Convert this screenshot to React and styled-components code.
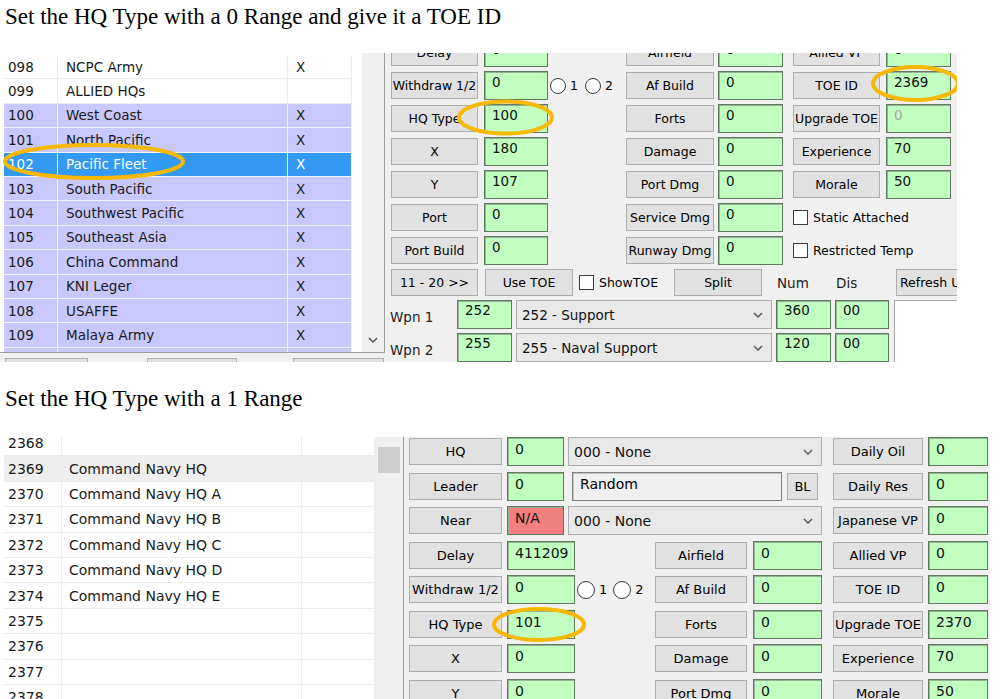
import React from 'react';
import styled, { createGlobalStyle } from 'styled-components';

const GlobalStyle = createGlobalStyle`
  html, body {
    margin: 0;
    padding: 0;
    background: #ffffff;
  }
  body {
    font-family: "DejaVu Sans", "Liberation Sans", sans-serif;
    color: #000;
  }
`;

const Page = styled.div`
  display: flex;
  flex-direction: column;
  width: 1002px;
  height: 699px;
  overflow: hidden;
  background: #fff;
`;

const Caption = styled.div`
  flex-shrink: 0;
  margin: ${p => p.$mt}px 0 ${p => p.$mb}px;
  padding-left: 5px;
  font-family: "Liberation Serif", "Times New Roman", serif;
  font-size: 23px;
  line-height: 26px;
`;

const Shot = styled.div`
  position: relative;
  display: flex;
  flex-shrink: 0;
  width: ${p => p.$w}px;
  height: ${p => p.$h}px;
  background: #f0f0f0;
  overflow: hidden;
  font-family: "DejaVu Sans", sans-serif;
`;

const Side = styled.div`
  display: flex;
  flex-direction: column;
  flex-shrink: 0;
`;

const ListBox = styled.div`
  display: flex;
  flex-shrink: 0;
  width: ${p => p.$w}px;
  height: ${p => p.$h}px;
  box-sizing: border-box;
  background: #fff;
  border-right: 1px solid #9c9c9c;
  border-bottom: ${p => (p.$closed ? '1px solid #9c9c9c' : '0')};
  overflow: hidden;
`;

const Rows = styled.div`
  display: flex;
  flex-direction: column;
  flex-shrink: 0;
  margin: ${p => p.$top}px 0 0 4px;
  font-size: ${p => p.$fs}px;
`;

const tones = {
  plain: { bg: '#ffffff', line: '#ececec', fg: '#1a1a1a' },
  hq: { bg: '#c8c8fc', line: '#f4f4ff', fg: '#1a1a1a' },
  sel: { bg: '#3399f3', line: '#f4f4ff', fg: '#ffffff' },
  hover: { bg: '#eeeeee', line: '#ececec', fg: '#1a1a1a' },
};

const Row = styled.div`
  display: flex;
  flex-shrink: 0;
  height: ${p => p.$h}px;
  box-sizing: border-box;
  color: ${p => tones[p.$tone].fg};
  border-bottom: 1px solid ${p => tones[p.$tone].line};
`;

const Cell = styled.div`
  display: flex;
  align-items: center;
  width: ${p => p.$w}px;
  box-sizing: border-box;
  padding-left: ${p => p.$pad}px;
  background: ${p => tones[p.$tone].bg};
  border-right: 1px solid ${p => tones[p.$tone].line};
  white-space: nowrap;
  overflow: hidden;
`;

const Track = styled.div`
  display: flex;
  flex-direction: column;
  justify-content: ${p => (p.$end ? 'flex-end' : 'flex-start')};
  align-items: center;
  flex-shrink: 0;
  width: ${p => p.$w}px;
  margin-left: auto;
  padding: 10px 0 9px;
  box-sizing: border-box;
  background: #f0f0f0;
`;

const Thumb = styled.div`
  width: 22px;
  height: 26px;
  background: #cdcdcd;
`;

const Stubs = styled.div`
  display: flex;
  flex-shrink: 0;
  margin-top: 5px;
`;

const Stub = styled.div`
  flex-shrink: 0;
  width: ${p => p.$w}px;
  height: 20px;
  margin-left: ${p => p.$ml}px;
  box-sizing: border-box;
  background: #e1e1e1;
  border: 1px solid #adadad;
`;

const Form = styled.div`
  display: flex;
  flex-direction: column;
  flex-shrink: 0;
  gap: ${p => p.$gap}px;
  margin-top: ${p => p.$top}px;
  padding-left: ${p => p.$left}px;
`;

const Grid = styled.div`
  display: grid;
  grid-template-columns: ${p => p.$cols};
  grid-auto-rows: ${p => p.$rowH}px;
  row-gap: ${p => p.$gap}px;
  align-items: center;
`;

const Btn = styled.button`
  grid-column: ${p => p.$col || 'auto'};
  display: flex;
  align-items: center;
  justify-content: ${p => (p.$start ? 'flex-start' : 'center')};
  flex-shrink: 0;
  width: ${p => p.$w}px;
  height: ${p => p.$h || 27}px;
  margin: 0 0 0 ${p => p.$ml || 0}px;
  padding: 0 0 0 ${p => (p.$start ? 3 : 0)}px;
  box-sizing: border-box;
  background: #e1e1e1;
  border: 1px solid #adadad;
  border-radius: 0;
  font-family: inherit;
  font-size: ${p => p.$fs}px;
  color: #000;
  white-space: nowrap;
  overflow: hidden;
`;

const Field = styled.div`
  grid-column: ${p => p.$col || 'auto'};
  flex-shrink: 0;
  width: ${p => p.$w}px;
  height: 29px;
  margin-left: ${p => p.$ml || 0}px;
  box-sizing: border-box;
  padding: ${p => p.$pt || 2}px 0 0 ${p => p.$pl || 7}px;
  background: ${p => (p.$red ? '#f28080' : '#c0ffc0')};
  border: 1px solid #5f7a5f;
  box-shadow: inset 1px 1px 0 #93b393;
  font-size: ${p => p.$fs}px;
  line-height: 16px;
  color: ${p => (p.$muted ? '#a8a8a8' : '#111')};
`;

const Span = styled.div`
  grid-column: 2 / 6;
  display: flex;
  align-items: center;
  height: 29px;
`;

const Combo = styled.div`
  display: flex;
  align-items: center;
  justify-content: space-between;
  flex-shrink: 0;
  width: ${p => p.$w}px;
  height: 29px;
  margin-left: ${p => p.$ml}px;
  padding: 0 8px 0 5px;
  box-sizing: border-box;
  background: #e8e8e8;
  border: 1px solid #adadad;
  font-size: ${p => p.$fs}px;
  color: #111;
`;

const TextBox = styled.div`
  flex-shrink: 0;
  width: ${p => p.$w}px;
  height: 29px;
  margin-left: ${p => p.$ml}px;
  padding: 3px 0 0 7px;
  box-sizing: border-box;
  background: #f0f0f0;
  border: 1px solid #808080;
  box-shadow: inset 1px 1px 0 #c4c4c4;
  font-size: ${p => p.$fs}px;
  line-height: 16px;
`;

const Radios = styled.div`
  grid-column: 3;
  display: flex;
  align-items: center;
  gap: ${p => p.$gap}px;
  padding-left: 2px;
  font-size: ${p => p.$fs}px;
`;

const RadioItem = styled.label`
  display: flex;
  align-items: center;
  gap: 4px;
`;

const Dot = styled.span`
  width: ${p => p.$d}px;
  height: ${p => p.$d}px;
  box-sizing: border-box;
  border-radius: 50%;
  border: 1px solid #3a3a3a;
  background: #fff;
`;

const CheckLine = styled.label`
  grid-column: ${p => p.$col || 'auto'};
  display: flex;
  align-items: center;
  gap: 5px;
  flex-shrink: 0;
  width: ${p => p.$w}px;
  margin-left: ${p => p.$ml || 0}px;
  font-size: ${p => p.$fs}px;
  white-space: nowrap;
`;

const Box = styled.span`
  width: 15px;
  height: 15px;
  box-sizing: border-box;
  border: 1px solid #3a3a3a;
  background: #fff;
`;

const ToolRow = styled.div`
  display: flex;
  align-items: center;
  height: 29px;
`;

const Word = styled.span`
  flex-shrink: 0;
  width: ${p => p.$w}px;
  margin-left: ${p => p.$ml || 0}px;
  font-size: ${p => p.$fs}px;
  color: #222;
`;

const WpnBlock = styled.div`
  display: flex;
`;

const WpnRows = styled.div`
  display: flex;
  flex-direction: column;
  gap: 4px;
`;

const WpnRow = styled.div`
  display: flex;
  align-items: center;
  height: 29px;
`;

const WpnLabel = styled.span`
  flex-shrink: 0;
  width: 67px;
  margin-left: -1px;
  padding-top: 5px;
  font-size: 13.5px;
  color: #222;
`;

const WhiteBox = styled.div`
  flex: 1;
  margin-left: 5px;
  background: #fff;
  border-left: 1px solid #a8a8a8;
  border-top: 1px solid #a8a8a8;
`;

const Marks = styled.svg`
  position: absolute;
  left: 0;
  top: 0;
  width: 100%;
  height: 100%;
  pointer-events: none;
`;

const Chevron = () => (
  <svg width="10" height="6" viewBox="0 0 10 6">
    <path d="M1 1l4 4 4-4" fill="none" stroke="#5a5a5a" strokeWidth="1.5" />
  </svg>
);

const Ring = ({ cx, cy, rx, ry }) => (
  <ellipse cx={cx} cy={cy} rx={rx} ry={ry} fill="none" stroke="#f6b800" strokeWidth="4" />
);

const hqList = [
  ['098', 'NCPC Army', 'X', 'plain'],
  ['099', 'ALLIED HQs', '', 'plain'],
  ['100', 'West Coast', 'X', 'hq'],
  ['101', 'North Pacific', 'X', 'hq'],
  ['102', 'Pacific Fleet', 'X', 'sel'],
  ['103', 'South Pacific', 'X', 'hq'],
  ['104', 'Southwest Pacific', 'X', 'hq'],
  ['105', 'Southeast Asia', 'X', 'hq'],
  ['106', 'China Command', 'X', 'hq'],
  ['107', 'KNI Leger', 'X', 'hq'],
  ['108', 'USAFFE', 'X', 'hq'],
  ['109', 'Malaya Army', 'X', 'hq'],
  ['', '', '', 'hq'],
];

const toeList = [
  ['2368', '', 'plain'],
  ['2369', 'Command Navy HQ', 'hover'],
  ['2370', 'Command Navy HQ A', 'plain'],
  ['2371', 'Command Navy HQ B', 'plain'],
  ['2372', 'Command Navy HQ C', 'plain'],
  ['2373', 'Command Navy HQ D', 'plain'],
  ['2374', 'Command Navy HQ E', 'plain'],
  ['2375', '', 'plain'],
  ['2376', '', 'plain'],
  ['2377', '', 'plain'],
  ['2378', '', 'plain'],
];

const firstStats = [
  { b1: 'Delay', v1: '0', b2: 'Airfield', v2: '0', b3: 'Allied VP', v3: '0' },
  { b1: 'Withdraw 1/2', v1: '0', radios: true, b2: 'Af Build', v2: '0', b3: 'TOE ID', v3: '2369' },
  { b1: 'HQ Type', v1: '100', b2: 'Forts', v2: '0', b3: 'Upgrade TOE', v3: '0', muted: true },
  { b1: 'X', v1: '180', b2: 'Damage', v2: '0', b3: 'Experience', v3: '70' },
  { b1: 'Y', v1: '107', b2: 'Port Dmg', v2: '0', b3: 'Morale', v3: '50' },
  { b1: 'Port', v1: '0', b2: 'Service Dmg', v2: '0', check: 'Static Attached' },
  { b1: 'Port Build', v1: '0', b2: 'Runway Dmg', v2: '0', check: 'Restricted Temp' },
];

const secondStats = [
  { b1: 'HQ', v1: '0', combo: '000 - None', b3: 'Daily Oil', v3: '0' },
  { b1: 'Leader', v1: '0', text: 'Random', b3: 'Daily Res', v3: '0' },
  { b1: 'Near', v1: 'N/A', red: true, combo: '000 - None', b3: 'Japanese VP', v3: '0' },
  { b1: 'Delay', v1: '411209', b2: 'Airfield', v2: '0', b3: 'Allied VP', v3: '0' },
  { b1: 'Withdraw 1/2', v1: '0', radios: true, b2: 'Af Build', v2: '0', b3: 'TOE ID', v3: '0' },
  { b1: 'HQ Type', v1: '101', b2: 'Forts', v2: '0', b3: 'Upgrade TOE', v3: '2370' },
  { b1: 'X', v1: '0', b2: 'Damage', v2: '0', b3: 'Experience', v3: '70' },
  { b1: 'Y', v1: '0', b2: 'Port Dmg', v2: '0', b3: 'Morale', v3: '50' },
];

const kitOne = {
  cols: '93px 64px 78px 92px 75px 93px 65px',
  btn: [87, 88, 87],
  field: [64, 65, 65],
  fs: 12.5,
  vfs: 13.5,
  pt: 2,
  dot: 16,
  dotGap: 7,
};

const kitTwo = {
  cols: '98px 68px 80px 98px 80px 95px 60px',
  btn: [93, 92, 90],
  field: [68, 69, 60],
  fs: 13,
  vfs: 14,
  pt: 3,
  dot: 18,
  dotGap: 6,
};

function StatRow({ row, kit }) {
  return (
    <>
      <Btn $col={1} $w={kit.btn[0]} $fs={kit.fs}>{row.b1}</Btn>
      {row.combo || row.text ? (
        <Span>
          <Field $w={57} $fs={kit.vfs} $pt={kit.pt} $red={row.red}>{row.v1}</Field>
          {row.combo && (
            <Combo $w={254} $ml={4} $fs={kit.vfs}>
              {row.combo}
              <Chevron />
            </Combo>
          )}
          {row.text && (
            <>
              <TextBox $w={210} $ml={8} $fs={kit.vfs}>{row.text}</TextBox>
              <Btn $w={31} $ml={5} $fs={kit.fs}>BL</Btn>
            </>
          )}
        </Span>
      ) : (
        <Field $col={2} $w={kit.field[0]} $fs={kit.vfs} $pt={kit.pt}>{row.v1}</Field>
      )}
      {row.radios && (
        <Radios $gap={kit.dotGap} $fs={kit.fs}>
          <RadioItem><Dot $d={kit.dot} />1</RadioItem>
          <RadioItem><Dot $d={kit.dot} />2</RadioItem>
        </Radios>
      )}
      {row.b2 && <Btn $col={4} $w={kit.btn[1]} $fs={kit.fs}>{row.b2}</Btn>}
      {row.b2 && <Field $col={5} $w={kit.field[1]} $fs={kit.vfs} $pt={kit.pt}>{row.v2}</Field>}
      {row.b3 && <Btn $col={6} $w={kit.btn[2]} $fs={kit.fs}>{row.b3}</Btn>}
      {row.b3 && (
        <Field $col={7} $w={kit.field[2]} $fs={kit.vfs} $pt={kit.pt} $muted={row.muted}>{row.v3}</Field>
      )}
      {row.check && (
        <CheckLine $col="6 / 8" $fs={kit.fs}>
          <Box />
          {row.check}
        </CheckLine>
      )}
    </>
  );
}

function App() {
  return (
    <>
      <GlobalStyle />
      <Page>
        <Caption $mt={4} $mb={23}>Set the HQ Type with a 0 Range and give it a TOE ID</Caption>

        <Shot $w={957} $h={309}>
          <Side>
            <ListBox $w={385} $h={300} $closed>
              <Rows $top={2} $fs={13.5}>
                {hqList.map(([id, name, flag, tone], i) => (
                  <Row key={i} $h={24.4} $tone={tone}>
                    <Cell $w={54} $pad={4} $tone={tone}>{id}</Cell>
                    <Cell $w={230} $pad={8} $tone={tone}>{name}</Cell>
                    <Cell $w={64} $pad={8} $tone={tone}>{flag}</Cell>
                  </Row>
                ))}
              </Rows>
              <Track $w={22} $end>
                <Chevron />
              </Track>
            </ListBox>
            <Stubs>
              <Stub $ml={5} $w={83} />
              <Stub $ml={59} $w={90} />
              <Stub $ml={56} $w={91} />
            </Stubs>
          </Side>

          <Form $top={-15} $left={6} $gap={4}>
            <Grid $cols={kitOne.cols} $rowH={29} $gap={4}>
              {firstStats.map((row, i) => (
                <StatRow key={i} row={row} kit={kitOne} />
              ))}
            </Grid>
            <ToolRow>
              <Btn $w={87} $fs={12.5}>11 - 20 &gt;&gt;</Btn>
              <Btn $w={88} $ml={7} $fs={12.5}>Use TOE</Btn>
              <CheckLine $w={95} $ml={6} $fs={12.5}>
                <Box />
                ShowTOE
              </CheckLine>
              <Btn $w={88} $fs={12.5}>Split</Btn>
              <Word $w={59} $ml={15} $fs={13.5}>Num</Word>
              <Word $w={60} $fs={13.5}>Dis</Word>
              <Btn $w={95} $fs={12.5} $start>Refresh Units</Btn>
            </ToolRow>
            <WpnBlock>
              <WpnRows>
                <WpnRow>
                  <WpnLabel>Wpn 1</WpnLabel>
                  <Field $w={55} $fs={13.5} $pt={1}>252</Field>
                  <Combo $w={256} $ml={4} $fs={13.5}>
                    252 - Support
                    <Chevron />
                  </Combo>
                  <Field $w={55} $ml={4} $fs={13.5} $pt={1}>360</Field>
                  <Field $w={54} $ml={4} $fs={13.5} $pt={1}>00</Field>
                </WpnRow>
                <WpnRow>
                  <WpnLabel>Wpn 2</WpnLabel>
                  <Field $w={55} $fs={13.5} $pt={1}>255</Field>
                  <Combo $w={256} $ml={4} $fs={13.5}>
                    255 - Naval Support
                    <Chevron />
                  </Combo>
                  <Field $w={55} $ml={4} $fs={13.5} $pt={1}>120</Field>
                  <Field $w={54} $ml={4} $fs={13.5} $pt={1}>00</Field>
                </WpnRow>
              </WpnRows>
              <WhiteBox />
            </WpnBlock>
          </Form>

          <Marks>
            <Ring cx={94} cy={108.5} rx={89} ry={16.5} />
            <Ring cx={505.5} cy={64.5} rx={46.5} ry={16} />
            <Ring cx={915.5} cy={30.5} rx={42.5} ry={16.5} />
          </Marks>
        </Shot>

        <Caption $mt={24} $mb={25}>Set the HQ Type with a 1 Range</Caption>

        <Shot $w={990} $h={262}>
          <ListBox $w={404} $h={262}>
            <Rows $top={-6} $fs={14}>
              {toeList.map(([id, name, tone], i) => (
                <Row key={i} $h={25.4} $tone={tone}>
                  <Cell $w={58} $pad={4} $tone={tone}>{id}</Cell>
                  <Cell $w={240} $pad={7} $tone={tone}>{name}</Cell>
                  <Cell $w={73} $pad={7} $tone={tone} />
                </Row>
              ))}
            </Rows>
            <Track $w={28}>
              <Thumb />
            </Track>
          </ListBox>

          <Form $top={0} $left={5} $gap={0}>
            <Grid $cols={kitTwo.cols} $rowH={29} $gap={5.5}>
              {secondStats.map((row, i) => (
                <StatRow key={i} row={row} kit={kitTwo} />
              ))}
            </Grid>
          </Form>

          <Marks>
            <Ring cx={539} cy={187.5} rx={45} ry={15.5} />
          </Marks>
        </Shot>
      </Page>
    </>
  );
}

export default App;
